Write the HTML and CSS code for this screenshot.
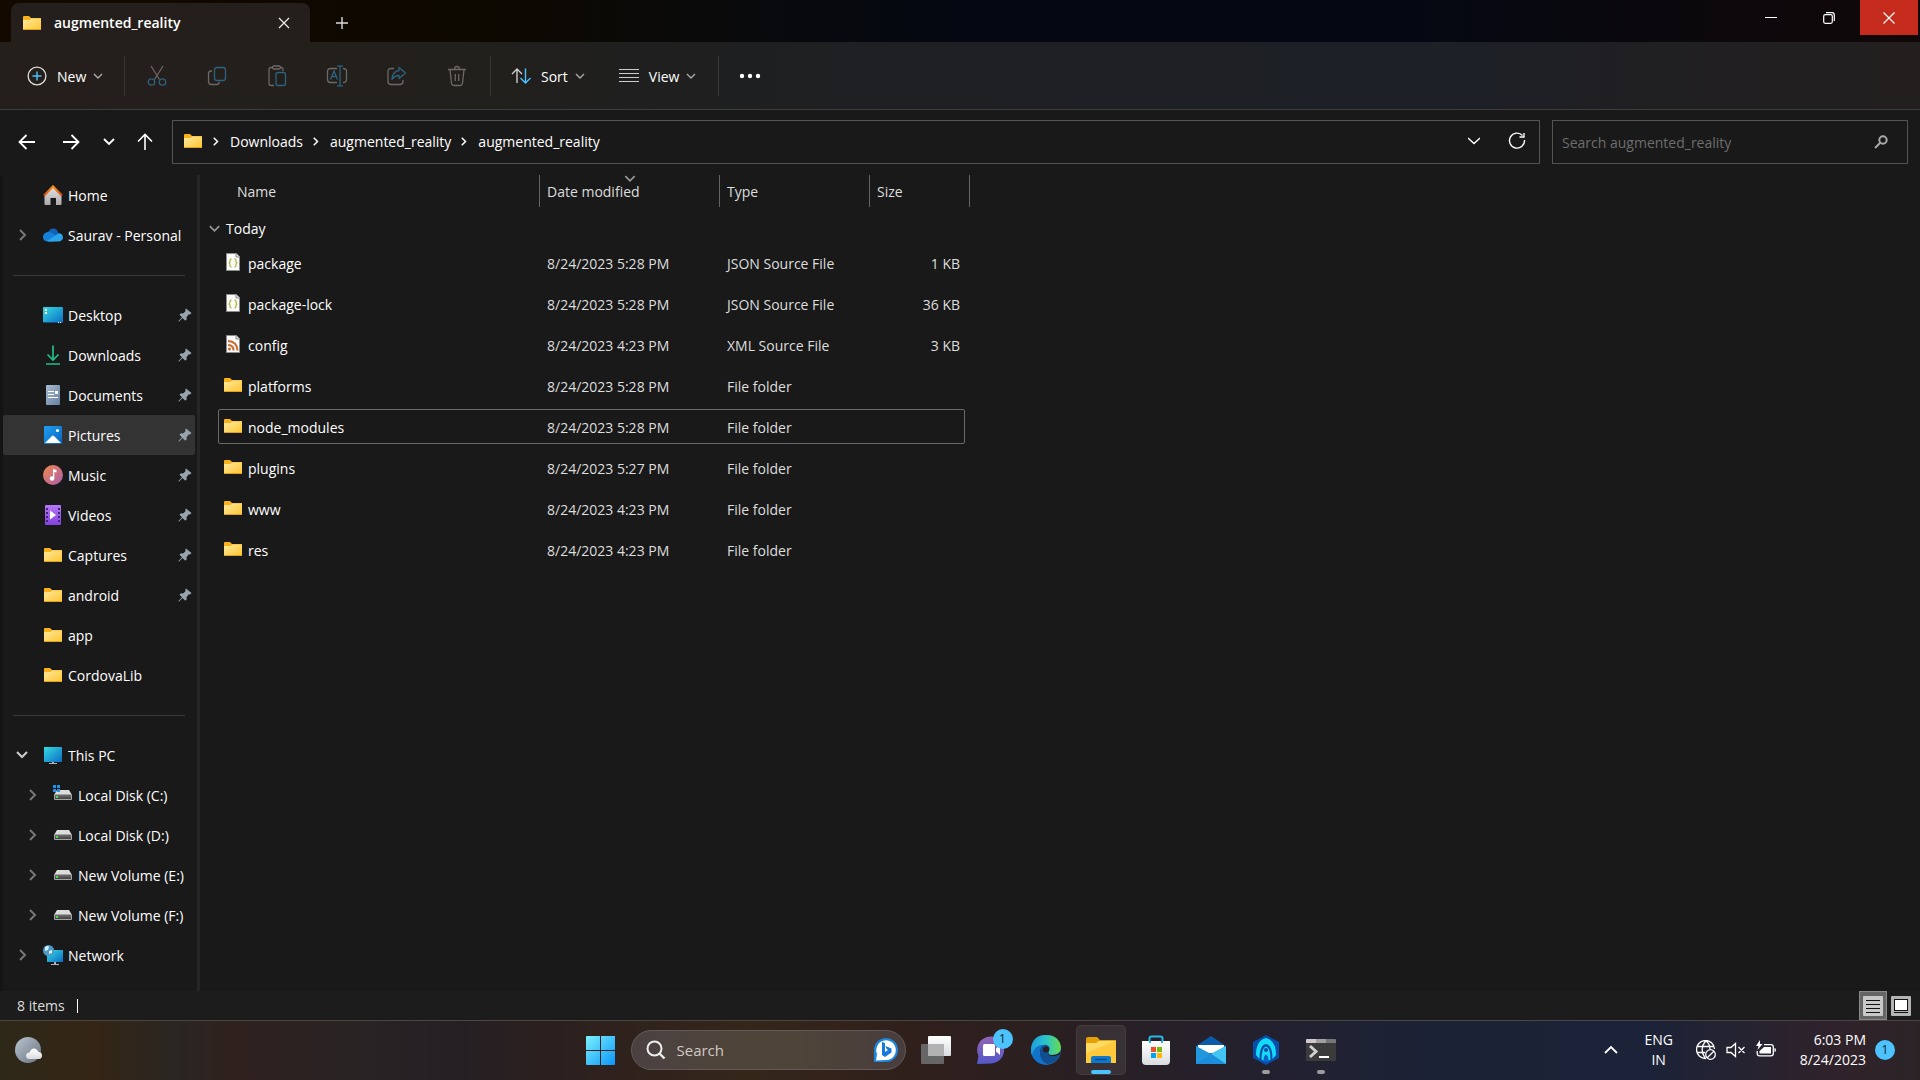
FILE: index.html
```html
<!DOCTYPE html>
<html lang="en">
<head>
    <meta charset="UTF-8">
    <meta name="viewport" content="width=device-width, initial-scale=1.0">
    <title>augmented_reality</title>
    <link rel="stylesheet" href="styles.css">
</head>
<body>
    <!-- Shared icons -->
    <svg class="sprite" aria-hidden="true">
        <defs>
            <linearGradient id="g-folder" x1="0" y1="0" x2="1" y2="1"><stop offset="0" stop-color="#ffe9a0"/><stop offset="1" stop-color="#ffc62f"/></linearGradient>
            <linearGradient id="g-screen" x1="0" y1="0" x2="1" y2="1"><stop offset="0" stop-color="#35dbe3"/><stop offset="1" stop-color="#0c6cc4"/></linearGradient>
            <linearGradient id="g-blue" x1="0" y1="0" x2="1" y2="1"><stop offset="0" stop-color="#1e9ff0"/><stop offset="1" stop-color="#0a63bd"/></linearGradient>
            <linearGradient id="g-home" x1="0" y1="0" x2="0" y2="1"><stop offset="0" stop-color="#e4e4e4"/><stop offset="1" stop-color="#a9a9a9"/></linearGradient>
            <linearGradient id="g-roof" x1="0" y1="0" x2="0" y2="1"><stop offset="0" stop-color="#f7941d"/><stop offset="1" stop-color="#d8490f"/></linearGradient>
            <linearGradient id="g-doc" x1="0" y1="0" x2="1" y2="1"><stop offset="0" stop-color="#a9bbd0"/><stop offset="1" stop-color="#64809f"/></linearGradient>
            <linearGradient id="g-music" x1="0" y1="0" x2="1" y2="1"><stop offset="0" stop-color="#f58a4b"/><stop offset="1" stop-color="#a65cae"/></linearGradient>
            <linearGradient id="g-video" x1="0" y1="0" x2="0" y2="1"><stop offset="0" stop-color="#b678f5"/><stop offset="1" stop-color="#8343dd"/></linearGradient>
            <linearGradient id="g-drive" x1="0" y1="0" x2="0" y2="1"><stop offset="0" stop-color="#6f6f6f"/><stop offset="1" stop-color="#414141"/></linearGradient>
            <linearGradient id="g-start" x1="0" y1="0" x2="1" y2="1"><stop offset="0" stop-color="#7cf0fd"/><stop offset="1" stop-color="#0a96f7"/></linearGradient>
            <linearGradient id="g-chat" x1="0" y1="0" x2="0" y2="1"><stop offset="0" stop-color="#9263b4"/><stop offset="1" stop-color="#5459c9"/></linearGradient>
            <linearGradient id="g-edge" x1="0" y1="0" x2="1" y2="0"><stop offset="0" stop-color="#1c9fe0"/><stop offset="0.5" stop-color="#2bc3c9"/><stop offset="1" stop-color="#66dd4c"/></linearGradient>
            <linearGradient id="g-moon" x1="0" y1="0" x2="1" y2="1"><stop offset="0" stop-color="#bac5d3"/><stop offset="1" stop-color="#69727c"/></linearGradient>
            <linearGradient id="g-white" x1="0" y1="0" x2="0" y2="1"><stop offset="0" stop-color="#ffffff"/><stop offset="1" stop-color="#d9dce0"/></linearGradient>
        </defs>
        <symbol id="folder" viewBox="0 0 20 20">
            <path d="M1 4q0-1 1-1h5l2 2h10v4H1z" fill="#f9b21b"/>
            <path d="M1 7h6.500l1.500-1.500h10V17H1z" fill="url(#g-folder)"/>
            <path d="M1 16h18v1H1z" fill="#e5a11b"/>
        </symbol>
        <symbol id="right" viewBox="0 0 8 12"><path d="M1 1l5 5-5 5" fill="none" stroke="currentColor" stroke-width="2"/></symbol>
        <symbol id="down" viewBox="0 0 10 6"><path d="M1 1l4 4 4-4" fill="none" stroke="currentColor" stroke-width="1.400"/></symbol>
        <symbol id="pin" viewBox="0 0 14 14"><path d="M8 0.500L13.500 5 12 6.500l-1-.2L8.700 8.800 8.500 12 7 12.500 4.600 10 1 13.500H.5V13L4 9.300 1.500 6.800 2.500 5.500l3-.3L7.600 3 7.300 1.200z" fill="#98a4ad"/></symbol>
        <symbol id="json" viewBox="0 0 20 20">
            <path d="M3.500 1.500h10l3 3v14h-13z" fill="#fafafa" stroke="#8d8d8d"/>
            <path d="M13 1.500V5h3.500" fill="#ddd" stroke="#8d8d8d"/>
            <path d="M8.500 7q-1.500 0-1.500 1.500v1L6.200 11l.8 1v1.500Q7 15 8.500 15M11.500 7q1.500 0 1.500 1.500v1l.8 1.500-.8 1v1.500q0 1.500-1.500 1.500" fill="none" stroke="#b5b945" stroke-width="1.300"/>
        </symbol>
        <symbol id="xml" viewBox="0 0 20 20">
            <path d="M3.500 1.500h10l3 3v14h-13z" fill="#fafafa" stroke="#8d8d8d"/>
            <path d="M13 1.500V5h3.500" fill="#ddd" stroke="#8d8d8d"/>
            <circle cx="6.500" cy="15" r="1.500" fill="#d06a2c"/>
            <path d="M5 11q5.500 0 5.500 5.500M5 7q9 .5 9.500 9.500" fill="none" stroke="#d06a2c" stroke-width="2"/>
        </symbol>
        <symbol id="drive" viewBox="0 0 20 20">
            <path d="M4 5h12l3 5H1z" fill="#dcdcdc"/>
            <rect x="1" y="9" width="18" height="6" rx="1" fill="#a5a5a5"/>
            <rect x="2" y="10" width="16" height="4" fill="url(#g-drive)"/>
            <rect x="3" y="11" width="2" height="2" fill="#4be04b"/>
        </symbol>
    </svg>

    <!-- Title bar -->
    <header class="titlebar">
        <div class="tab">
            <svg class="icon"><use href="#folder"/></svg>
            <span class="tab-name">augmented_reality</span>
            <button class="tab-close" aria-label="Close tab"><svg width="12" height="12"><path d="M1 1l10 10M11 1L1 11" stroke="#eee" stroke-width="1.200"/></svg></button>
        </div>
        <button class="tab-add" aria-label="New tab"><svg width="14" height="14"><path d="M7 1v12M1 7h12" stroke="#ddd" stroke-width="1.400"/></svg></button>
        <div class="window-buttons">
            <button aria-label="Minimize"><svg width="12" height="12"><path d="M0 5.500h12" stroke="#fff"/></svg></button>
            <button aria-label="Restore"><svg width="12" height="12" fill="none" stroke="#fff" stroke-width="1.200"><rect x="0.700" y="2.700" width="8.600" height="8.600" rx="1.500"/><path d="M3 .7h6q2.300 0 2.300 2.300v6"/></svg></button>
            <button class="window-close" aria-label="Close"><svg width="12" height="12"><path d="M.5.5l11 11M11.500.5l-11 11" stroke="#fff" stroke-width="1.200"/></svg></button>
        </div>
    </header>

    <!-- Command bar -->
    <div class="toolbar">
        <button class="tool new">
            <svg width="20" height="20" fill="none"><circle cx="10" cy="10" r="8.900" stroke="#ddd" stroke-width="1.300"/><path d="M10 5.500v9M5.500 10h9" stroke="#4cc2ff" stroke-width="1.400"/></svg>
            <span>New</span>
            <svg class="caret"><use href="#down"/></svg>
        </button>
        <div class="tool-group">
            <button aria-label="Cut" disabled><svg width="20" height="22" fill="none" stroke-width="1.300"><path d="M4 1l8.500 13.500M16 1L7.500 14.500" stroke="#6b6865"/><circle cx="4.500" cy="17" r="3.200" stroke="#2d6280"/><circle cx="15.500" cy="17" r="3.200" stroke="#2d6280"/></svg></button>
            <button aria-label="Copy" disabled><svg width="20" height="22" fill="none" stroke-width="1.300"><path d="M5 6H4Q1.500 6 1.500 8.500v8Q1.500 19.500 4.500 19.500h5q2.500 0 3-2.500" stroke="#6b6865"/><rect x="7.500" y="2.500" width="11" height="13" rx="2.500" stroke="#2d6280"/></svg></button>
            <button aria-label="Paste" disabled><svg width="20" height="22" fill="none" stroke-width="1.300"><path d="M7 20.500H4q-2 0-2-2v-14q0-2 2-2h2M13 2.500h1q2 0 2 2V6" stroke="#6b6865"/><rect x="5.500" y="1" width="8" height="3" rx="1.500" stroke="#6b6865"/><rect x="9" y="7.500" width="9.500" height="13" rx="2" stroke="#2d6280"/></svg></button>
            <button aria-label="Rename" disabled><svg width="22" height="22" fill="none" stroke-width="1.300"><path d="M11 3.500H4.500q-3 0-3 3v8q0 3 3 3H11M17 3.500q3.500 0 3.500 3v8q0 3-3.500 3" stroke="#6b6865"/><path d="M4.500 14.500L8 6l3.500 8.500M5.700 11.500h4.600M14 1.200v19.600M11 1.200h6M11 20.800h6" stroke="#2d6280"/></svg></button>
            <button aria-label="Share" disabled><svg width="22" height="22" fill="none" stroke-width="1.300"><path d="M8 3.500H5q-3 0-3 3v10q0 3 3 3h9q3 0 3-3V15" stroke="#6b6865"/><path d="M13 2.500L19.500 8 13 13.500v-3q-4.500 0-7 4 .5-8 7-9z" stroke="#2d6280" stroke-linejoin="round"/></svg></button>
            <button aria-label="Delete" disabled><svg width="20" height="22" fill="none" stroke="#6b6865" stroke-width="1.300"><path d="M1 4.500h18M7.500 4.500Q7.500 1.500 10 1.500t2.500 3M3 4.500l1.500 13.500q.3 2.500 2.500 2.500h6q2.200 0 2.500-2.500L17 4.500M8.300 9v7M11.700 9v7"/></svg></button>
        </div>
        <button class="tool sort">
            <svg width="20" height="18" fill="none" stroke-width="1.400"><path d="M6 16V2M1 7l5-5 5 5" stroke="#ccc"/><path d="M14.500 1.500V16M9.500 11l5 5 5-5" stroke="#4cc2ff"/></svg>
            <span>Sort</span>
            <svg class="caret"><use href="#down"/></svg>
        </button>
        <button class="tool view">
            <svg width="20" height="14" stroke="#ccc"><path d="M0 .5h20M0 4.500h20M0 8.500h20M0 12.500h20"/></svg>
            <span>View</span>
            <svg class="caret"><use href="#down"/></svg>
        </button>
        <button class="tool more" aria-label="See more"><svg width="22" height="6" fill="#fff"><circle cx="3" cy="3" r="2.200"/><circle cx="11" cy="3" r="2.200"/><circle cx="19" cy="3" r="2.200"/></svg></button>
    </div>

    <!-- Address row -->
    <div class="address-row">
        <div class="history">
            <button aria-label="Back"><svg width="18" height="16" fill="none" stroke="#fff" stroke-width="1.800"><path d="M17 8H2M8.500 1L1.500 8l7 7"/></svg></button>
            <button aria-label="Forward"><svg width="18" height="16" fill="none" stroke="#fff" stroke-width="1.800"><path d="M1 8h15M9.500 1l7 7-7 7"/></svg></button>
            <button class="recent" aria-label="Recent locations"><svg width="12" height="8" fill="none" stroke="#fff" stroke-width="1.800"><path d="M1 1l5 5 5-5"/></svg></button>
            <button class="up" aria-label="Up"><svg width="16" height="18" fill="none" stroke="#fff" stroke-width="1.600"><path d="M8 17V2M1 8.500l7-7 7 7"/></svg></button>
        </div>
        <nav class="breadcrumb" aria-label="Path">
            <svg class="icon"><use href="#folder"/></svg>
            <svg class="crumb-sep"><use href="#right"/></svg>
            <a href="#">Downloads</a>
            <svg class="crumb-sep"><use href="#right"/></svg>
            <a href="#">augmented_reality</a>
            <svg class="crumb-sep"><use href="#right"/></svg>
            <a href="#">augmented_reality</a>
            <button class="previous" aria-label="Previous locations"><svg width="12" height="8" fill="none" stroke="#fff" stroke-width="1.400"><path d="M0 1l6 5.500L12 1"/></svg></button>
            <button aria-label="Refresh"><svg width="18" height="18" fill="none" stroke="#fff" stroke-width="1.400"><path d="M14.500 3.500A7.500 7.500 0 1 0 16.500 8M16 1v4h-4.500"/></svg></button>
        </nav>
        <label class="search">
            <input type="text" placeholder="Search augmented_reality" aria-label="Search augmented_reality">
            <svg width="14" height="14" fill="none" stroke="#aaa" stroke-width="2"><circle cx="9" cy="5" r="3.700"/><path d="M6 8l-5 5"/></svg>
        </label>
    </div>

    <div class="explorer">
        <!-- Navigation pane -->
        <nav class="sidebar" aria-label="Folders">
            <a href="#"><span class="twist"></span><svg class="icon" viewBox="0 0 20 20"><path d="M1.500 10L10 2l8.500 8v9q0 1-1 1H13v-7H7.500v7h-5q-1 0-1-1z" fill="url(#g-home)"/><path d="M1 10.500l9-9 9 9" fill="none" stroke="url(#g-roof)" stroke-width="2.200"/></svg><span>Home</span></a>
            <a href="#"><span class="twist"><svg><use href="#right"/></svg></span><svg class="icon" viewBox="0 0 20 20"><path d="M5 8q1-4.500 5.500-4.500Q14 3.500 15.500 8L10 13z" fill="#1062b8"/><path d="M4.500 16.500Q0 16 0 12t4.500-5Q7 6.500 9 8l6 4-4 4.500z" fill="#1681d8"/><path d="M4 16L13 10q2-2.500 4.500-1.500Q20 9.500 20 12.500t-4 4H5z" fill="#2aa5ec"/></svg><span>Saurav - Personal</span></a>
            <hr>
            <a href="#"><span class="twist"></span><svg class="icon" viewBox="0 0 20 20"><rect y="2" width="20" height="16" rx="1" fill="url(#g-screen)"/><path d="M2 4h2v2H2zM2 7h2v2H2z" fill="#fff"/><path d="M0 17h20v1H0z" fill="#0b4f86"/><path d="M15 17h1v1h-1zM17 17h1v1h-1z" fill="#fff"/></svg><span>Desktop</span><svg class="pin"><use href="#pin"/></svg></a>
            <a href="#"><span class="twist"></span><svg class="icon" viewBox="0 0 20 20"><path d="M10 .5V15M4.500 9.500L10 15l5.500-5.500M3 19h14" fill="none" stroke="#22bd8c" stroke-width="1.700"/></svg><span>Downloads</span><svg class="pin"><use href="#pin"/></svg></a>
            <a href="#"><span class="twist"></span><svg class="icon" viewBox="0 0 20 20"><rect x="3" width="14" height="20" rx="1" fill="url(#g-doc)"/><path d="M5 6.500h6M5 9.500h6M5 12.500h10" stroke="#fff"/><path d="M12 6h3v3h-3z" fill="#fff"/></svg><span>Documents</span><svg class="pin"><use href="#pin"/></svg></a>
            <a href="#" class="current"><span class="twist"></span><svg class="icon" viewBox="0 0 20 20"><rect x="1" y="1" width="18" height="18" rx="1" fill="url(#g-blue)"/><path d="M2 18l7-7q1-1 2 0l7 7z" fill="#fff"/><circle cx="14.500" cy="5.500" r="1.600" fill="#fff"/></svg><span>Pictures</span><svg class="pin"><use href="#pin"/></svg></a>
            <a href="#"><span class="twist"></span><svg class="icon" viewBox="0 0 20 20"><circle cx="10" cy="10" r="10" fill="url(#g-music)"/><circle cx="9" cy="13.500" r="2.300" fill="#fff"/><path d="M10 13.500V4l3.500 1v2.500L11.300 7v6.500z" fill="#fff"/></svg><span>Music</span><svg class="pin"><use href="#pin"/></svg></a>
            <a href="#"><span class="twist"></span><svg class="icon" viewBox="0 0 20 20"><rect x="2" width="16" height="20" rx="1" fill="url(#g-video)"/><path d="M7 5.500l6 4.500-6 4.500z" fill="#fff"/><path d="M4 3v16M16 3v16" stroke="#41237c" stroke-width="2" stroke-dasharray="2 2"/></svg><span>Videos</span><svg class="pin"><use href="#pin"/></svg></a>
            <a href="#"><span class="twist"></span><svg class="icon"><use href="#folder"/></svg><span>Captures</span><svg class="pin"><use href="#pin"/></svg></a>
            <a href="#"><span class="twist"></span><svg class="icon"><use href="#folder"/></svg><span>android</span><svg class="pin"><use href="#pin"/></svg></a>
            <a href="#"><span class="twist"></span><svg class="icon"><use href="#folder"/></svg><span>app</span></a>
            <a href="#"><span class="twist"></span><svg class="icon"><use href="#folder"/></svg><span>CordovaLib</span></a>
            <hr>
            <a href="#"><span class="twist open"><svg viewBox="0 0 12 8"><path d="M1 1l5 5 5-5" fill="none" stroke="currentColor" stroke-width="2"/></svg></span><svg class="icon" viewBox="0 0 20 20"><rect x="1" y="2" width="18" height="15" fill="url(#g-screen)"/><path d="M9 17h2v1h3v1H6v-1h3z" fill="#aab6c0"/></svg><span>This PC</span></a>
            <a href="#" class="nested"><span class="twist"><svg><use href="#right"/></svg></span><svg class="icon" viewBox="0 0 20 20"><use href="#drive" width="20" height="20"/><path d="M0 0h3v3H0zM4 0h3v3H4zM0 4h3v3H0zM4 4h3v3H4z" fill="#1e93e6"/></svg><span>Local Disk (C:)</span></a>
            <a href="#" class="nested"><span class="twist"><svg><use href="#right"/></svg></span><svg class="icon"><use href="#drive"/></svg><span>Local Disk (D:)</span></a>
            <a href="#" class="nested"><span class="twist"><svg><use href="#right"/></svg></span><svg class="icon"><use href="#drive"/></svg><span>New Volume (E:)</span></a>
            <a href="#" class="nested"><span class="twist"><svg><use href="#right"/></svg></span><svg class="icon"><use href="#drive"/></svg><span>New Volume (F:)</span></a>
            <a href="#"><span class="twist"><svg><use href="#right"/></svg></span><svg class="icon" viewBox="0 0 20 20"><rect x="4" y="5" width="16" height="12" fill="url(#g-screen)"/><path d="M11 17h2v2h3v1H8v-1h3z" fill="#aab6c0"/><circle cx="5.500" cy="5.500" r="5.500" fill="#4b9ac4"/><path d="M2 2q3-2 4 0L5 5 2 6zM6 6l3-1v3L6 9z" fill="#d8edf5"/></svg><span>Network</span></a>
        </nav>

        <!-- File list -->
        <main class="files">
            <table>
                <colgroup><col class="col-name"><col class="col-date"><col class="col-type"><col class="col-size"></colgroup>
                <thead>
                    <tr>
                        <th>Name</th>
                        <th>Date modified<svg class="sorted"><use href="#down"/></svg></th>
                        <th>Type</th>
                        <th>Size</th>
                    </tr>
                </thead>
                <tbody>
                    <tr class="group"><td colspan="4"><div class="group-name"><svg class="group-arrow"><use href="#down"/></svg>Today</div></td></tr>
                    <tr><td><div class="file"><svg class="icon"><use href="#json"/></svg>package</div></td><td>8/24/2023 5:28 PM</td><td>JSON Source File</td><td>1 KB</td></tr>
                    <tr><td><div class="file"><svg class="icon"><use href="#json"/></svg>package-lock</div></td><td>8/24/2023 5:28 PM</td><td>JSON Source File</td><td>36 KB</td></tr>
                    <tr><td><div class="file"><svg class="icon"><use href="#xml"/></svg>config</div></td><td>8/24/2023 4:23 PM</td><td>XML Source File</td><td>3 KB</td></tr>
                    <tr><td><div class="file"><svg class="icon"><use href="#folder"/></svg>platforms</div></td><td>8/24/2023 5:28 PM</td><td>File folder</td><td></td></tr>
                    <tr class="focused"><td><div class="file"><svg class="icon"><use href="#folder"/></svg>node_modules</div></td><td>8/24/2023 5:28 PM</td><td>File folder</td><td></td></tr>
                    <tr><td><div class="file"><svg class="icon"><use href="#folder"/></svg>plugins</div></td><td>8/24/2023 5:27 PM</td><td>File folder</td><td></td></tr>
                    <tr><td><div class="file"><svg class="icon"><use href="#folder"/></svg>www</div></td><td>8/24/2023 4:23 PM</td><td>File folder</td><td></td></tr>
                    <tr><td><div class="file"><svg class="icon"><use href="#folder"/></svg>res</div></td><td>8/24/2023 4:23 PM</td><td>File folder</td><td></td></tr>
                </tbody>
            </table>
        </main>
    </div>

    <!-- Status bar -->
    <div class="statusbar">
        <span class="count">8 items</span>
        <button class="layout on" aria-label="Details"><svg width="20" height="20"><rect width="20" height="20" rx="1" fill="#c8c8c8"/><path d="M3 4.500h14M3 8.500h14M3 12.500h14M3 16.500h14" stroke="#111"/></svg></button>
        <button class="layout" aria-label="Large icons"><svg width="20" height="20"><rect width="20" height="20" rx="1" fill="#b4b4b4"/><rect x="3.500" y="3.500" width="13" height="11" fill="#fff" stroke="#111"/><path d="M3 16.500h14" stroke="#111"/></svg></button>
    </div>

    <!-- Taskbar -->
    <footer class="taskbar">
        <button class="weather" aria-label="Weather"><svg width="28" height="28"><circle cx="13" cy="14" r="13" fill="url(#g-moon)"/><path d="M14 23q-3-.3-3-3.200t3.500-3.200Q16 12.500 19 12.500t4.500 3.500q3.500.3 3.500 3.500t-3 3.500z" fill="url(#g-white)"/></svg></button>
        <div class="apps">
            <button class="app" aria-label="Start"><svg width="30" height="30" fill="url(#g-start)"><path d="M0 2q0-1 1-1h28v28q0 1-1 1H1q-1 0-1-1z"/><path d="M14.500 1v29M0 15.500h29" stroke="#2a2020" stroke-width="1"/></svg></button>
            <label class="task-search">
                <svg width="20" height="20" fill="none" stroke="#eee"><circle cx="8.500" cy="8.500" r="7" stroke-width="2"/><path d="M13.500 13.500l5 5" stroke-width="2.400"/></svg>
                <input type="text" placeholder="Search" aria-label="Search">
                <svg width="26" height="26"><path d="M1 25V13A12 12 0 1 1 13 25z" fill="#1a86dd"/><path d="M3 23.500l1-6.500a9.800 9.800 0 1 1 9 6z" fill="#fff"/><path d="M9 5l3 1v9l3-2-1.500-1-1-3 6 2.500v4L12 20l-3-2z" fill="#1878dc"/></svg>
            </label>
            <button class="app" aria-label="Task view"><svg width="30" height="30"><rect y="9" width="23" height="20" rx="1" fill="#666"/><rect x="7" y="1" width="23" height="20" rx="1" fill="url(#g-white)"/><rect x="7" y="9" width="16" height="12" fill="#b1b1b1"/></svg></button>
            <button class="app" aria-label="Chat, 1 new"><svg width="30" height="30"><path d="M1 29l1.500-8A13.500 13.500 0 1 1 15 28.500z" fill="url(#g-chat)"/><rect x="7" y="9" width="12" height="12" rx="1.500" fill="#fff"/><path d="M20 13.500l4-3.500v10l-4-3.500z" fill="#fff"/></svg><span class="badge chat-badge">1</span></button>
            <button class="app" aria-label="Edge"><svg width="30" height="30"><circle cx="15" cy="15" r="15" fill="#1273ca"/><path d="M0 13Q2 0 15 0t15 12q0 8-9 8-5 0-4-3 3-4-1-6Q9 8 4 13.500 1 17 1 20-.5 17 0 13z" fill="url(#g-edge)"/><path d="M9 15q2-6 7-5 4 2 2 6-3 4 2 5 4 1 7-1 2-.5 1 1.500Q24 29 16 29q-8-3-7-14z" fill="#124f91"/><path d="M18 16q-3 4 2 5 4 .8 7-1 1-.5 1.500.5L30 15q-2 5-9 5-5 0-3-4z" fill="#271f22"/><circle cx="15" cy="14.500" r="3" fill="#271f22"/></svg></button>
            <button class="app active" aria-label="File Explorer"><svg width="30" height="30"><path d="M0 4q0-2 2-2h9l3 3h16v6H0z" fill="#e3a008"/><path d="M0 8h10l3-2h17v22H0z" fill="#ffc93c"/><path d="M0 8h10l3-2h17L0 18z" fill="#ffda64"/><path d="M5 28v-5q0-2 2-2h16q2 0 2 2v5z" fill="#0f79cc"/><path d="M9 24.500h12" stroke="#064e92" stroke-width="1.500"/></svg></button>
            <button class="app" aria-label="Microsoft Store"><svg width="30" height="30"><path d="M8.500 8V3.500q0-2 2-2h9q2 0 2 2V8" fill="none" stroke="#26b9ea" stroke-width="2"/><path d="M1 6h28v20q0 4-4 4H5q-4 0-4-4z" fill="url(#g-white)"/><path d="M10 12h5v5h-5z" fill="#f25022"/><path d="M16 12h5v5h-5z" fill="#7fba00"/><path d="M10 18h5v5h-5z" fill="#00a4ef"/><path d="M16 18h5v5h-5z" fill="#ffb900"/><path d="M9 6v2M21 6v2" stroke="#26b9ea" stroke-width="2"/></svg></button>
            <button class="app" aria-label="Mail"><svg width="30" height="30"><path d="M0 11L15 1l15 10v8H0z" fill="#0b5ca8"/><path d="M2 10h26v8H2z" fill="#fff"/><path d="M0 11l15 8 15-8v18H0z" fill="#2197dd"/><path d="M30 11v18L15 19z" fill="#43c5f4"/><path d="M0 29l15-10 15 10z" fill="#1c8edb"/></svg></button>
            <button class="app running" aria-label="App"><svg width="30" height="30"><path d="M15 0l13 7v16l-13 7-13-7V7z" fill="#064ea9"/><path d="M15 3Q5 5.500 5 20l3.500 4Q8.500 10 15 9q6.500 1 6.500 15l3.500-4Q25 5.500 15 3z" fill="#12dcfa"/><path d="M15 11.500q-4.500 1-4.500 13L15 27l4.500-2.500q0-12-4.500-13z" fill="#12dcfa"/><circle cx="15" cy="15" r="2" fill="#064ea9"/><path d="M12.500 26q0-5.500 2.500-6.500 2.500 1 2.500 6.500L15 27.500z" fill="#0d63c5"/></svg></button>
            <button class="app running" aria-label="Terminal"><svg width="30" height="30"><rect y="4" width="30" height="22" rx="1.500" fill="#3b3b3b"/><path d="M0 8V5q0-1 1-1h9v4z" fill="#cfc9ce"/><path d="M10 4h10v4H10z" fill="#a29fa2"/><path d="M20 4h9q1 0 1 1v3H20z" fill="#777"/><path d="M4 11l6 5.500L4 22" fill="none" stroke="#d0d0d0" stroke-width="3"/><path d="M13 21h10v2H13z" fill="#fff"/></svg></button>
        </div>
        <div class="tray">
            <button class="overflow" aria-label="Show hidden icons"><svg width="14" height="10" fill="none" stroke="#fff" stroke-width="1.800"><path d="M1 8l6-6 6 6"/></svg></button>
            <button class="language">ENG<br>IN</button>
            <button class="status" aria-label="Network, volume, battery">
                <svg width="20" height="20" fill="none" stroke="#fff" stroke-width="1.300"><path d="M10 18.500A9 9 0 1 1 18.500 9M1 6.500h17M1 12.500h8M9.500 1Q3 9 9 18M10 1q4 3 4 8"/><circle cx="14.500" cy="14.500" r="4.800"/><path d="M11 18l7-7"/></svg>
                <svg width="20" height="20" fill="none" stroke="#fff" stroke-width="1.300"><path d="M1 7.500v5h4l4.500 4v-13l-4.500 4zM12.500 7l6 6M18.500 7l-6 6"/></svg>
                <svg width="20" height="20"><path d="M8 4.700h7q2.300 0 2.300 2.300v6.500q0 2.300-2.300 2.300H3.500q-2.300 0-2.300-2.300V11" fill="none" stroke="#fff" stroke-width="1.300"/><path d="M8 7h7v6.500H3.500V11z" fill="#fff"/><path d="M18.500 8q1.500 0 1.500 2t-1.500 2zM4 0L0 6h2.500L1.500 10 6.500 4H4z" fill="#fff"/></svg>
            </button>
            <button class="clock">6:03 PM<br>8/24/2023</button>
            <span class="badge">1</span>
        </div>
    </footer>
</body>
</html>
```
FILE: styles.css
```css
* {
    box-sizing: border-box;
}

body {
    margin: 0;
    height: 100vh;
    display: flex;
    flex-direction: column;
    overflow: hidden;
    background-color: #191919;
    color: #fff;
    font-family: "Open Sans", "Noto Sans", sans-serif;
    font-size: 14px;
    line-height: 20px;
}

button, input {
    font: inherit;
    color: inherit;
    background: none;
    border: none;
    padding: 0;
    margin: 0;
}

button {
    display: flex;
    align-items: center;
    justify-content: center;
}

a {
    color: inherit;
    text-decoration: none;
}

svg {
    display: block;
    flex-shrink: 0;
}

.sprite {
    position: absolute;
    width: 0;
    height: 0;
}

.icon {
    width: 20px;
    height: 20px;
}

/* Title bar */
.titlebar {
    display: flex;
    height: 42px;
    padding-left: 11px;
    background: linear-gradient(90deg, #140900, #0d0800 25%, #0a0a0a 36%, #050812 50%, #050813 73%, #0b080c 88%, #100708);
}

.tab {
    display: flex;
    align-items: center;
    width: 299px;
    height: 39px;
    margin-top: 3px;
    padding: 0 16px 0 11px;
    border-radius: 8px 8px 0 0;
    background-color: #241f1c;
}

.tab-name {
    margin-left: 12px;
    font-weight: 600;
}

.tab-close {
    width: 20px;
    height: 20px;
    margin-left: auto;
}

.tab-add {
    width: 40px;
    height: 40px;
    margin: 3px 0 0 12px;
}

.window-buttons {
    display: flex;
    margin: 0 2px 0 auto;
}

.window-buttons button {
    width: 58px;
    height: 35px;
}

.window-buttons .window-close {
    margin-left: 2px;
    background-color: #c42b1c;
}

/* Command bar */
.toolbar {
    display: flex;
    align-items: center;
    height: 68px;
    padding: 0 0 0 27px;
    background: linear-gradient(90deg, #251f1c, #22201c 24%, #1f1f1f 33%, #1e2024 50%, #1d2027 76%, #201f22 86%, #231f1f);
    border-bottom: 1px solid #3d3d3d;
}

.tool {
    gap: 10px;
    height: 40px;
}

.tool span {
    padding-top: 2px;
}

.tool .caret {
    width: 10px;
    height: 6px;
    margin-left: -3px;
    color: #aaa;
}

.new {
    width: 97px;
    justify-content: flex-start;
}

.tool-group {
    display: flex;
    border: solid #383634;
    border-width: 0 1px;
    padding: 0 3px 0 2px;
}

.tool-group button {
    width: 60px;
    height: 40px;
}

.sort {
    margin-left: 20px;
}

.view {
    margin-left: 34px;
    padding-right: 22px;
    border-right: 1px solid #383838;
}

.more {
    margin-left: 20px;
}

/* Address row */
.address-row {
    display: flex;
    height: 65px;
    padding: 10px 12px 11px 5px;
}

.history {
    display: flex;
    width: 167px;
}

.history button {
    width: 44px;
}

.history .recent {
    width: 32px;
}

.history .up {
    width: 40px;
}

.breadcrumb {
    display: flex;
    align-items: center;
    flex: 1;
    padding: 0 11px 2px 10px;
    border: 1px solid #535353;
}

.breadcrumb a {
    padding-top: 2px;
}

.crumb-sep {
    width: 6px;
    height: 9px;
    margin: 0 11px 0 10px;
}

.breadcrumb button {
    width: 22px;
    height: 30px;
}

.breadcrumb .previous {
    margin: 0 21px 0 auto;
}

.search {
    display: flex;
    align-items: center;
    width: 356px;
    margin-left: 12px;
    padding: 0 19px 0 9px;
    border: 1px solid #535353;
}

.search input {
    flex: 1;
    padding-top: 2px;
    outline: none;
}

.search input::placeholder {
    color: #6d6d6d;
}

/* Explorer body */
.explorer {
    display: flex;
    flex: 1;
    min-height: 0;
}

.sidebar {
    width: 200px;
    border-left: 3px solid #141414;
    border-right: 3px solid #262626;
    padding-right: 2px;
}

.sidebar a {
    display: flex;
    align-items: center;
    height: 40px;
    padding: 0 3px 0 16px;
    border-radius: 2px;
    white-space: nowrap;
}

.sidebar a span {
    padding-top: 2px;
}

.sidebar a.nested {
    padding-left: 26px;
}

.sidebar a.current {
    background-color: #333;
}

.sidebar .icon {
    margin-right: 5px;
}

.sidebar hr {
    height: 1px;
    margin: 20px 10px 19px;
    border: none;
    background-color: #3a3a3a;
}

.sidebar a .twist {
    width: 24px;
    padding: 0;
    color: #777;
}

.twist svg {
    width: 8px;
    height: 12px;
}

.sidebar a .open {
    color: #ccc;
}

.twist.open svg {
    width: 12px;
    height: 8px;
    margin-left: -3px;
}

.pin {
    width: 14px;
    height: 14px;
    margin-left: auto;
}

/* File list */
.files {
    flex: 1;
    padding-left: 18px;
}

table {
    width: 747px;
    margin-top: -6px;
    table-layout: fixed;
    border-spacing: 0 6px;
}

.col-name {
    width: 322px;
}

.col-date {
    width: 180px;
}

.col-type {
    width: 150px;
}

th, td {
    padding: 2px 0 0 7px;
    text-align: left;
    color: #dedede;
}

th {
    position: relative;
    height: 32px;
    font-weight: 400;
}

th:first-child {
    padding-left: 19px;
}

th::after {
    content: "";
    position: absolute;
    top: 0;
    right: 0;
    width: 1px;
    height: 32px;
    background-color: #636363;
}

th:last-child::after {
    right: -5px;
}

.sorted {
    position: absolute;
    top: 0;
    left: 84px;
    width: 12px;
    height: 7px;
    color: #999;
}

td {
    height: 35px;
}

td:first-child {
    padding-left: 5px;
    color: #fff;
}

td:last-child {
    padding-right: 5px;
    text-align: right;
}

.file {
    display: flex;
    align-items: center;
    gap: 5px;
}

.file .icon {
    margin: -4px 0 0;
}

tr.group td {
    height: 26px;
    padding: 5px 0 0;
    text-align: left;
}

.group-name {
    display: flex;
    align-items: center;
    gap: 5px;
    margin-left: -10px;
}

.group-arrow {
    width: 13px;
    height: 7px;
    color: #999;
}

.focused {
    outline: 1px solid #6a6a6a;
    outline-offset: -1px;
    border-radius: 2px;
}

/* Status bar */
.statusbar {
    display: flex;
    align-items: center;
    height: 29px;
    padding: 0 5px 0 17px;
    background-color: #1c1c1c;
    color: #dedede;
}

.count {
    margin-right: auto;
    padding-right: 12px;
    border-right: 1px solid #fff;
    line-height: 14px;
}

.layout {
    width: 28px;
    height: 29px;
}

.layout.on {
    border: 1px solid #8a8a8a;
    background-color: #666;
}

/* Taskbar */
.taskbar {
    display: grid;
    grid-template-columns: 1fr auto 1fr;
    align-items: center;
    height: 60px;
    padding: 0 0 2px 1px;
    border-top: 1px solid #4a4543;
    background: linear-gradient(90deg, #2e2819, #342515 5%, #2a2622 9%, #2f211e 12%, #272325 20%, #251f23 24%, #2c201f 29%, #35261a 39%, #30201c 47%, #291f22 56%, #222131 68%, #1c2234 72%, #1c2238 86%, #262330 91%, #30222a 96%, #2b2427);
}

.weather {
    width: 28px;
    height: 40px;
    margin-left: 14px;
}

.apps {
    display: flex;
    align-items: center;
    gap: 5px;
}

.app {
    position: relative;
    width: 50px;
    height: 50px;
    border-radius: 5px;
}

.app.active {
    background-color: rgba(255, 255, 255, 0.08);
    border: 1px solid rgba(255, 255, 255, 0.06);
}

.app.active::after, .app.running::after {
    content: "";
    position: absolute;
    bottom: 1px;
    left: 50%;
    width: 8px;
    height: 4px;
    margin-left: -4px;
    border-radius: 2px;
    background-color: #9c9a9d;
}

.app.active::after {
    bottom: 0;
    width: 20px;
    margin-left: -10px;
    background-color: #4cc2ff;
}

.badge {
    width: 20px;
    height: 20px;
    border-radius: 50%;
    background-color: #4cc2ff;
    color: #17232b;
    font-size: 12px;
    text-align: center;
}

.chat-badge {
    position: absolute;
    top: 4px;
    right: 3px;
}

.task-search {
    display: flex;
    align-items: center;
    width: 275px;
    height: 40px;
    padding: 0 6px 0 14px;
    border: 1px solid #64595a;
    border-radius: 20px;
    background: linear-gradient(90deg, #4b4142, #4f4438 40%, #4f4438 60%, #483d3d);
    font-size: 15px;
}

.task-search input {
    flex: 1;
    min-width: 0;
    margin-left: 11px;
    outline: none;
}

.task-search input::placeholder {
    color: #d0cac6;
}

.tray {
    display: flex;
    align-items: center;
    justify-content: flex-end;
    padding-right: 25px;
}

.overflow {
    width: 30px;
    height: 40px;
}

.language {
    width: 50px;
    margin-left: 8px;
}

.status {
    gap: 10px;
    margin: 0 24px 0 12px;
}

.clock {
    margin-right: 9px;
    text-align: right;
}
```
